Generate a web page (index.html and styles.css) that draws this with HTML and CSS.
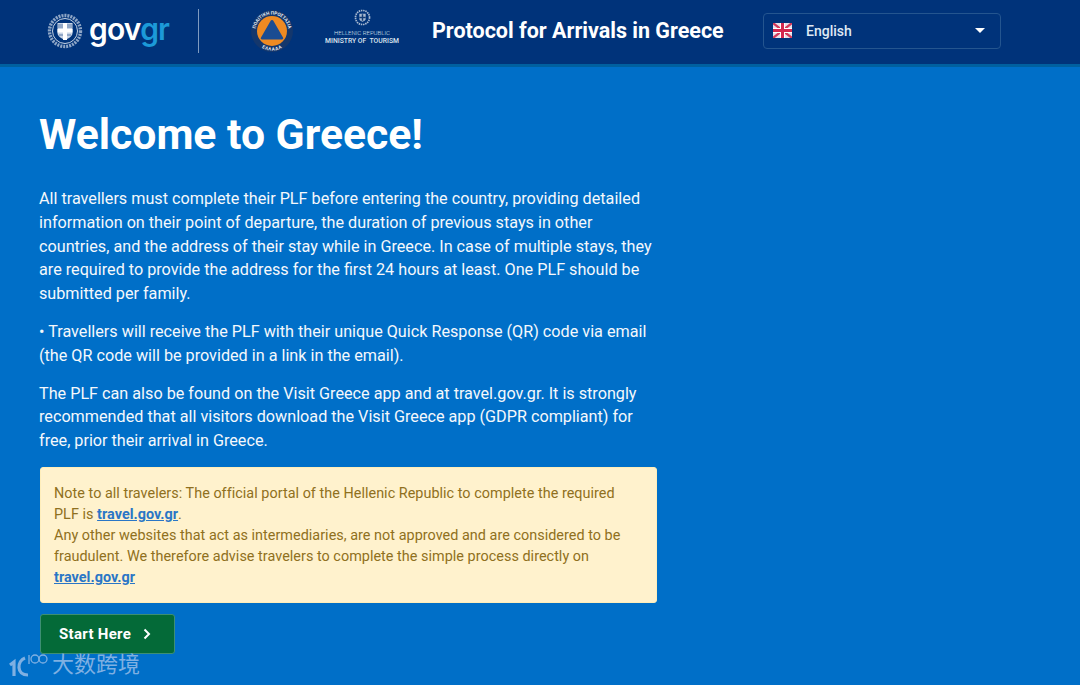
FILE: index.html

```html
<!DOCTYPE html>
<html lang="en">
    <head>
        <meta charset="UTF-8">
        <meta name="viewport" content="width=device-width, initial-scale=1.0">
        <title>Protocol for Arrivals in Greece</title>
        <link rel="stylesheet" href="styles.css">
    </head>
    <body>
        <div class="header">
            <div class="gov-logo">
                <svg class="emblem" width="36" height="36" viewBox="0 0 36 36">
                    <circle cx="18" cy="18" r="15.5" fill="none" stroke="#8ea6c6" stroke-width="3.4" stroke-dasharray="2 1"/>
                    <circle cx="18" cy="18" r="12.5" fill="none" stroke="#c5d2e3" stroke-width="1"/>
                    <path d="M10.500 10h15v10c0 3.500-4 5.500-7.500 7-3.500-1.500-7.500-3.500-7.500-7z" fill="#c9d5e6"/>
                    <path d="M16 10h4v6h5.500v3.500H20V27h-4v-7.500h-5.500V16H16z" fill="#fff"/>
                    <path d="M11 12h5M11 14h5M20 12h5M20 14h5M12 22h4M20 22h4" stroke="#5b7ba8" stroke-width="1"/>
                </svg>
                <span class="gov-name">gov<span class="gov-gr">gr</span></span>
            </div>
            <div class="divider"></div>
            <svg class="civil" width="42" height="44" viewBox="0 0 42 44">
                <circle cx="21" cy="22" r="21" fill="#14376c"/>
                <defs>
                    <path id="ring-top" d="M5 26A16.500 16.500 0 1 1 37 26"/>
                    <path id="ring-bottom" d="M9 33.300A16.500 16.500 0 0 0 33 33.300"/>
                </defs>
                <text class="ring-text"><textPath href="#ring-top" startOffset="50%" text-anchor="middle">ΠΟΛΙΤΙΚΗ ΠΡΟΣΤΑΣΙΑ</textPath></text>
                <text class="ring-text"><textPath href="#ring-bottom" startOffset="50%" text-anchor="middle" dominant-baseline="hanging">ΕΛΛΑΔΑ</textPath></text>
                <circle cx="21" cy="22" r="15" fill="#ee8a22"/>
                <path d="M21 11c.7 0 1.200.4 1.500 1l9.500 16.500c.6 1.100 0 2-1.200 2H11.200c-1.200 0-1.800-.9-1.200-2L19.500 12c.3-.6.800-1 1.500-1z" fill="#1a4c92"/>
            </svg>
            <div class="ministry">
                <svg width="17" height="17" viewBox="0 0 16 16">
                    <circle cx="8" cy="8" r="6.6" fill="none" stroke="#a9bad1" stroke-width="1.600" stroke-dasharray="1.400 .7"/>
                    <path d="M5 4.500h6v5c0 1.200-1.800 2.200-3 2.600-1.200-.4-3-1.400-3-2.600z" fill="#a9bad1"/>
                    <path d="M7.300 5h1.400v2.200H11v1.400H8.700V11H7.300V8.600H5V7.200h2.300z" fill="#123c77"/>
                </svg>
                <span class="ministry-top">HELLENIC REPUBLIC</span>
                <span class="ministry-name">MINISTRY OF&nbsp; TOURISM</span>
            </div>
            <div class="title">Protocol for Arrivals in Greece</div>
            <div class="lang">
                <svg class="flag" width="19" height="15" viewBox="0 0 19 15">
                    <rect width="19" height="15" fill="#e9dfe6"/>
                    <path d="M0 0l19 15M19 0L0 15" stroke="#d3385a" stroke-width="2.200"/>
                    <path d="M9.500 0v15M0 7.500h19" stroke="#fff" stroke-width="5"/>
                    <path d="M9.500 0v15M0 7.500h19" stroke="#d3284f" stroke-width="3"/>
                </svg>
                <span class="lang-name">English</span>
                <span class="caret"></span>
            </div>
        </div>

        <div class="main">
            <h1>Welcome to Greece!</h1>
            <p>All travellers must complete their PLF before entering the country, providing detailed information on their point of departure, the duration of previous stays in other countries, and the address of their stay while in Greece. In case of multiple stays, they are required to provide the address for the first 24 hours at least. One PLF should be submitted per family.</p>
            <p>• Travellers will receive the PLF with their unique Quick Response (QR) code via email (the QR code will be provided in a link in the email).</p>
            <p>The PLF can also be found on the Visit Greece app and at travel.gov.gr. It is strongly recommended that all visitors download the Visit Greece app (GDPR compliant) for free, prior their arrival in Greece.</p>
            <div class="note">
                Note to all travelers: The official portal of the Hellenic Republic to complete the required PLF is <a href="#">travel.gov.gr</a>.<br>
                Any other websites that act as intermediaries, are not approved and are considered to be fraudulent. We therefore advise travelers to complete the simple process directly on <a href="#">travel.gov.gr</a>
            </div>
            <button class="start">Start Here
                <svg width="10" height="12" viewBox="0 0 10 12"><path d="M2.500 1.500L7 6l-4.500 4.500" fill="none" stroke="#fff" stroke-width="2"/></svg>
            </button>
        </div>

        <div class="watermark">
            <svg width="40" height="26" viewBox="0 0 40 26">
                <path d="M1 13l4-3v14" fill="none" stroke="#7fb0e2" stroke-width="3.200"/>
                <path d="M16 6c-8 3-9 17 3 17" fill="none" stroke="#7fb0e2" stroke-width="3.200"/>
                <path d="M20 3v9" stroke="#7fb0e2" stroke-width="1.300"/>
                <circle cx="26" cy="7" r="4" fill="none" stroke="#7fb0e2" stroke-width="1.300"/>
                <circle cx="34" cy="7" r="4" fill="none" stroke="#7fb0e2" stroke-width="1.300"/>
            </svg>
            <span>大数跨境</span>
        </div>
    </body>
</html>
```

FILE: styles.css

```css
* {
    box-sizing: border-box;
}

body {
    margin: 0;
    height: 685px;
    overflow: hidden;
    position: relative;
    background-color: #006fc8;
    font-family: Roboto, "Noto Sans CJK SC", sans-serif;
    color: #fff;
}

.header {
    display: flex;
    align-items: center;
    height: 67px;
    padding-left: 47px;
    padding-bottom: 3px;
    background-color: #00337a;
    border-bottom: 3px solid #00609f;
}

.gov-logo {
    display: flex;
    align-items: center;
    width: 151px;
}

.gov-name {
    margin-left: 6px;
    margin-top: -4px;
    font-family: Inter, sans-serif;
    font-size: 30px;
    font-weight: 600;
    letter-spacing: -0.8px;
}

.gov-gr {
    color: #1c9ad8;
}

.divider {
    width: 1px;
    height: 44px;
    background-color: #7f9bc0;
}

.civil {
    margin-left: 52px;
}

.ring-text {
    font-size: 4.600px;
    font-weight: 700;
    fill: #e6ecf4;
}

.ministry {
    display: flex;
    flex-direction: column;
    align-items: center;
    width: 76px;
    margin-left: 31px;
    margin-top: -7px;
    color: #dbe3ee;
}

.ministry-top {
    margin-top: 3px;
    font-size: 6px;
    font-weight: 300;
    line-height: 8px;
    white-space: nowrap;
}

.ministry-name {
    font-size: 6.800px;
    font-weight: 500;
    line-height: 9px;
    white-space: nowrap;
}

.title {
    margin-left: 32px;
    width: 331px;
    font-size: 21.500px;
    font-weight: 700;
    white-space: nowrap;
}

.lang {
    display: flex;
    align-items: center;
    width: 238px;
    height: 36px;
    padding: 0 15px 0 9px;
    border: 1px solid #24558f;
    border-radius: 4px;
}

.lang-name {
    margin-left: 14px;
    flex-grow: 1;
    font-size: 14px;
    font-weight: 500;
    color: #dfe8f3;
}

.caret {
    width: 0;
    height: 0;
    border-top: 5px solid #fff;
    border-left: 5px solid transparent;
    border-right: 5px solid transparent;
}

.main {
    width: 657px;
    padding: 0 0 0 39px;
}

h1 {
    margin: 43px 0 28px;
    font-size: 42.700px;
    line-height: 49px;
    font-weight: 700;
    white-space: nowrap;
}

p {
    margin: 0 0 14px;
    font-size: 16.200px;
    line-height: 23.800px;
    font-weight: 450;
    color: #f4f8fc;
}

.note {
    margin: 14px 0 0 1px;
    padding: 15px 28px 14px 13px;
    background-color: #fff2cd;
    border: 1px solid #ffeeba;
    border-radius: 3px;
    color: #8f7020;
    font-size: 14.400px;
    line-height: 21px;
    letter-spacing: 0.03px;
}

.note a {
    color: #2a76c6;
    font-weight: 700;
}

.start {
    display: flex;
    align-items: center;
    gap: 11px;
    height: 40px;
    width: 135px;
    margin: 11px 0 0 1px;
    padding: 0 0 0 18px;
    background-color: #046a38;
    border: 1px solid #3d8f73;
    border-radius: 3px;
    color: #fff;
    font-family: inherit;
    font-size: 15px;
    font-weight: 700;
    letter-spacing: 0.3px;
}

.watermark {
    position: absolute;
    left: 9px;
    top: 652px;
    display: flex;
    align-items: center;
    gap: 3px;
    color: #7fb0e2;
    font-size: 22px;
    line-height: 26px;
}
```
